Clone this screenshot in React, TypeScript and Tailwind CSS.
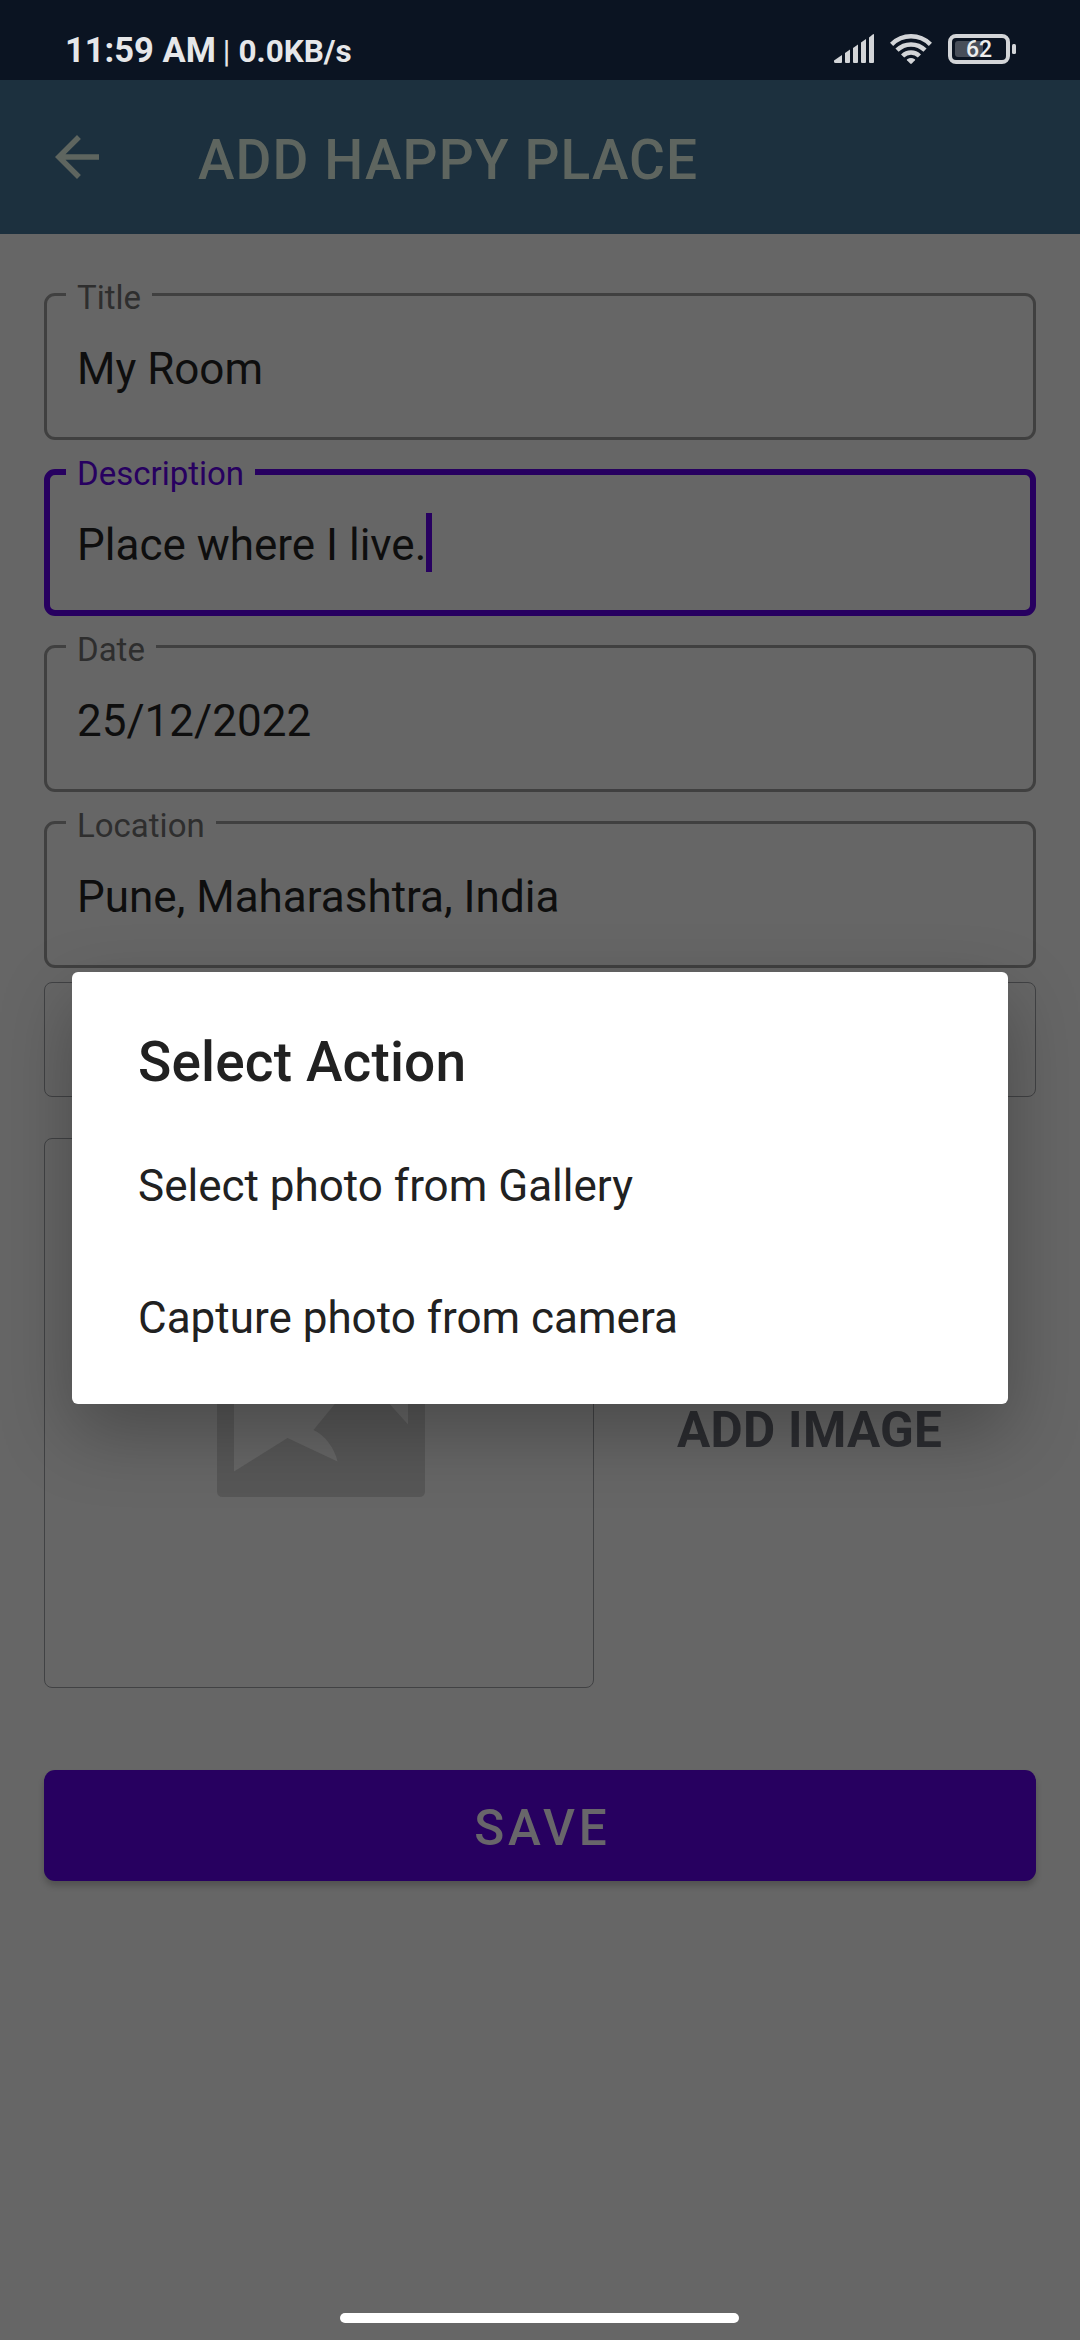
import clsx from "clsx";

function StatusBar() {
  return (
    <header className="flex h-20 items-start justify-between bg-[#0b1422] pl-[65px] pr-[64px]">
      <div className="mt-[30px] flex items-baseline whitespace-pre font-bold leading-[41px] text-[#e6e7e9]">
        <span className="text-[34.5px]">11:59 AM</span>
        <span className="ml-[7px] text-[31px] font-normal">|</span>
        <span className="ml-[8px] text-[31.5px]">0.0KB/s</span>
      </div>
      <div className="flex pt-[34px]">
        <svg width="40" height="30" viewBox="0 0 40 30" fill="#d3d5d8">
          <path d="M0 26.5 8 21v7q0 1-1 1H1.500Q0 29 0 27.500Z" />
          <path d="M11 19 16 15.500V28q0 1-1 1h-3q-1 0-1-1Z" />
          <path d="M19 14 24 10.500V28q0 1-1 1h-3q-1 0-1-1Z" />
          <path d="M27 8.500 32 5V28q0 1-1 1h-3q-1 0-1-1Z" />
          <path d="M35 3.500 39 .300q1-.6 1 .5V28q0 1-1 1h-3q-1 0-1-1Z" />
        </svg>
        <svg className="ml-4" width="42" height="30" viewBox="0 0 42 30" fill="none" stroke="#d3d5d8" strokeWidth="4.500">
          <path d="M1.600 10.300C12.500-.4 29.500-.4 40.400 10.300" />
          <path d="M7 16.200c7.800-7.700 20.200-7.700 28 0" />
          <path d="M12.600 22c4.700-4.700 12.100-4.700 16.800 0" />
          <path d="M17 26.300q-.5-.6.2-1.100 3.800-2.500 7.600 0 .7.500.2 1.100l-3.200 3.300q-.8.700-1.600 0Z" fill="#d3d5d8" stroke="none" />
        </svg>
        <div className="ml-4 flex items-center">
          <div className="relative flex h-[30px] w-[62px] items-center justify-center rounded-[8px] border-4 border-[#d3d5d8]">
            <div className="absolute left-[3px] top-[3px] h-4 w-7 rounded-[3px] bg-[#484e59]" />
            <span className="relative text-[23px] font-medium leading-none text-[#eceded]">62</span>
          </div>
          <div className="ml-[2px] h-[10px] w-1 rounded-[1.500px] bg-[#d3d5d8]" />
        </div>
      </div>
    </header>
  );
}

function AppBar() {
  return (
    <div className="flex h-[154px] items-start bg-[#1c303e] pl-[44px] text-[#5e655f]">
      <svg className="mt-[44px]" width="66" height="66" viewBox="0 0 24 24" fill="currentColor">
        <path d="M20 11H7.830l5.590-5.590L12 4l-8 8 8 8 1.410-1.410L7.830 13H20v-2z" />
      </svg>
      <h1 className="ml-[88px] mt-[48px] text-[55px] font-medium leading-[64px] tracking-[1.100px]">ADD HAPPY PLACE</h1>
    </div>
  );
}

function Field({ label, value, focused = false }: { label: string; value: string; focused?: boolean }) {
  return (
    <div className="relative h-[147px]">
      <div
        className={clsx(
          "flex h-full items-start rounded-[11px]",
          focused ? "border-[6px] border-[#270060] pl-[27px] pt-[40px]" : "border-[3px] border-[#404040] pl-[30px] pt-[43px]",
        )}
      >
        <span className="text-[44px] leading-[60px] text-[#0e0e0e]">{value}</span>
        {focused && <span className="-mt-[2px] h-[59px] w-[6px] bg-[#270060]" />}
      </div>
      <label
        className={clsx(
          "absolute -top-[15px] left-[22px] bg-[#666666] px-[11px] text-[33px] leading-[40px]",
          focused ? "text-[#270060]" : "text-[#2e2e2e]",
        )}
      >
        {label}
      </label>
    </div>
  );
}

function ImagePlaceholder() {
  return (
    <div className="flex h-[550px] w-[550px] items-center justify-center rounded-[8px] border border-[#414244]">
      <svg className="ml-[3px]" width="208" height="168" viewBox="0 0 208 168">
        <path
          fill="#575757"
          fillRule="evenodd"
          d="M6 0H202q6 0 6 6V162q0 6-6 6H6q-6 0-6-6V6Q0 0 6 0ZM17 17V142.500L70.500 109 120.500 132.500C118 120 108 106 96.500 101L144 43 191 95.500V17Z"
        />
      </svg>
    </div>
  );
}

function ActionDialog() {
  return (
    <div className="absolute left-[72px] top-[972px] h-[432px] w-[936px] rounded-[6px] bg-white pt-[58px] text-[#212121] shadow-[0_28px_72px_rgba(0,0,0,0.28)]">
      <h2 className="mb-[26px] pl-[66px] text-[55px] font-medium leading-[64px] tracking-[0.150px]">Select Action</h2>
      {["Select photo from Gallery", "Capture photo from camera"].map((action) => (
        <button key={action} className="flex h-[132px] w-full items-center pl-[66px] text-[44px] leading-[52px]">
          {action}
        </button>
      ))}
    </div>
  );
}

export default function App() {
  return (
    <div className="relative flex h-[2340px] w-[1080px] flex-col overflow-hidden bg-[#666666] font-[Roboto,sans-serif]">
      <StatusBar />
      <AppBar />
      <main className="flex flex-col px-[44px] pt-[59px]">
        <div className="flex flex-col gap-[29px]">
          <Field label="Title" value="My Room" />
          <Field label="Description" value="Place where I live." focused />
          <Field label="Date" value="25/12/2022" />
          <Field label="Location" value="Pune, Maharashtra, India" />
        </div>
        <div className="mt-[14px] h-[115px] rounded-[8px] border border-[#414244]" />
        <div className="mt-[41px] flex items-start">
          <ImagePlaceholder />
          <span className="ml-[83px] mt-[263px] text-[49.500px] font-bold leading-[58px] tracking-[0.300px] text-[#2c2d31]">
            ADD IMAGE
          </span>
        </div>
        <button className="mt-[82px] flex h-[111px] items-start justify-center rounded-[11px] bg-[#270060] pl-[5px] pt-[29px] text-[49.500px] font-medium leading-[58px] tracking-[4px] text-[#68666a] shadow-[0_5px_6px_rgba(0,0,0,0.2)]">
          SAVE
        </button>
      </main>
      <div className="mb-[17px] ml-[340px] mt-auto h-[10px] w-[399px] rounded-full bg-white" />
      <ActionDialog />
    </div>
  );
}
